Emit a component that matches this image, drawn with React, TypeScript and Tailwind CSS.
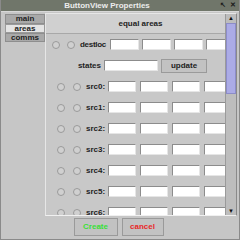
import React from "react";

const fieldCls =
    "h-[11px] shrink-0 bg-white border border-t-[#8c8c8c] border-l-[#8c8c8c] border-b-[#e6e6e6] border-r-[#e6e6e6]";

const Radio = () => (
    <div className="w-[8px] h-[8px] shrink-0 rounded-full border border-[#9a9a9a] bg-[#d0d0d0]" />
);

const srcRows = ["src0:", "src1:", "src2:", "src3:", "src4:", "src5:", "src6:"];

const App = () => {
    return (
        <div
            className="w-[240px] h-[240px] flex flex-col bg-[#c6c6c6] border-l border-r border-b border-[#8a8a8a] overflow-hidden"
            style={{ fontFamily: '"Liberation Sans", Arial, sans-serif' }}
        >
            {/* title bar */}
            <div className="h-[12px] shrink-0 bg-[#70766a] flex items-center relative border-b border-[#d8d8d8]">
                <div className="flex-1 text-center text-[8px] font-bold text-[#ececec] leading-none pr-[26px]">
                    ButtonView Properties
                </div>
                <div className="absolute right-[3px] top-[1px] flex gap-[4px] text-[7px] text-[#1a1a1a] font-bold leading-none">
                    <span>↖</span>
                    <span>✕</span>
                </div>
            </div>

            <div className="flex flex-1 min-h-0 pt-[1px]">
                {/* tabs */}
                <div className="w-[44px] shrink-0 pl-[4px] pt-[1px] flex flex-col">
                    <div className="h-[10px] bg-[#a9a9a9] border border-[#8e8e8e] text-[8px] font-bold text-[#1e1e1e] leading-none flex items-center justify-center">
                        main
                    </div>
                    <div className="h-[9px] bg-[#e4e4e4] border border-[#9a9a9a] text-[8px] font-bold text-[#1e1e1e] leading-none flex items-center justify-center">
                        areas
                    </div>
                    <div className="h-[9px] bg-[#a9a9a9] border border-[#8e8e8e] text-[8px] font-bold text-[#1e1e1e] leading-none flex items-center justify-center">
                        comms
                    </div>
                </div>

                {/* content panel */}
                <div className="flex-1 min-w-0 flex flex-col">
                    <div className="h-[203px] mr-[2px] border border-t-[#e6e6e6] border-l-[#e6e6e6] border-b-[#f0f0f0] border-r-[#8a8a8a] flex bg-[#c8c8c8]">
                        <div className="flex-1 min-w-0 overflow-hidden">
                            <div className="h-[20px] border-b border-[#a8a8a8] bg-[#d0d0d0] flex items-center justify-center pl-[10px] text-[8px] font-bold text-[#1e1e1e]">
                                equal areas
                            </div>

                            <div className="h-[21px] flex items-center pl-[6px]">
                                <Radio />
                                <div className="w-[7px] shrink-0" />
                                <Radio />
                                <div className="w-[30px] shrink-0 ml-[5px] text-[8px] font-bold text-[#1e1e1e] tracking-[-0.3px]">destloc</div>
                                <div className="flex gap-[3px]">
                                    {[0, 1, 2, 3].map((i) => (
                                        <div key={i} className={`w-[29px] ${fieldCls}`} />
                                    ))}
                                </div>
                            </div>

                            <div className="h-[21px] flex items-center">
                                <div className="w-[55px] shrink-0 text-right text-[8px] font-bold text-[#1e1e1e]">states</div>
                                <div className={`ml-[3px] w-[54px] ${fieldCls}`} />
                                <div className="ml-[3px] w-[46px] h-[14px] shrink-0 bg-[#c2c2c2] border border-[#9a9a9a] text-[8px] font-bold text-[#1e1e1e] flex items-center justify-center">
                                    update
                                </div>
                            </div>

                            {srcRows.map((s) => (
                                <div key={s} className="h-[21px] flex items-center pl-[11px]">
                                    <Radio />
                                    <div className="w-[8px] shrink-0" />
                                    <Radio />
                                    <div className="w-[21px] shrink-0 ml-[5px] text-[8px] font-bold text-[#1e1e1e]">{s}</div>
                                    <div className="ml-[1px] flex gap-[4px]">
                                        {[0, 1, 2, 3].map((i) => (
                                            <div key={i} className={`w-[28px] ${fieldCls}`} />
                                        ))}
                                    </div>
                                </div>
                            ))}
                        </div>

                        {/* scrollbar */}
                        <div className="w-[11px] shrink-0 flex flex-col bg-[#bdbdbd] border-l border-[#9a9a9a]">
                            <div className="h-[8px] flex items-center justify-center text-[6px] leading-none text-[#111]">▲</div>
                            <div className="h-[71px] mt-[1px] bg-[#ababe6] border border-[#8c8cc8]" />
                            <div className="flex-1" />
                            <div className="h-[8px] flex items-center justify-center text-[6px] leading-none text-[#111]">▼</div>
                        </div>
                    </div>
                </div>
            </div>

            {/* buttons */}
            <div className="h-[23px] shrink-0 flex items-start justify-center gap-[4px] pt-[2px] pr-[3px]">
                <div className="w-[44px] h-[18px] bg-[#c2c2c2] border border-[#9a9a9a] text-[8px] font-bold text-[#38e038] flex items-center justify-center">
                    Create
                </div>
                <div className="w-[42px] h-[18px] bg-[#c2c2c2] border border-[#9a9a9a] text-[8px] font-bold text-[#e82828] flex items-center justify-center">
                    cancel
                </div>
            </div>
        </div>
    );
};

export default App;
